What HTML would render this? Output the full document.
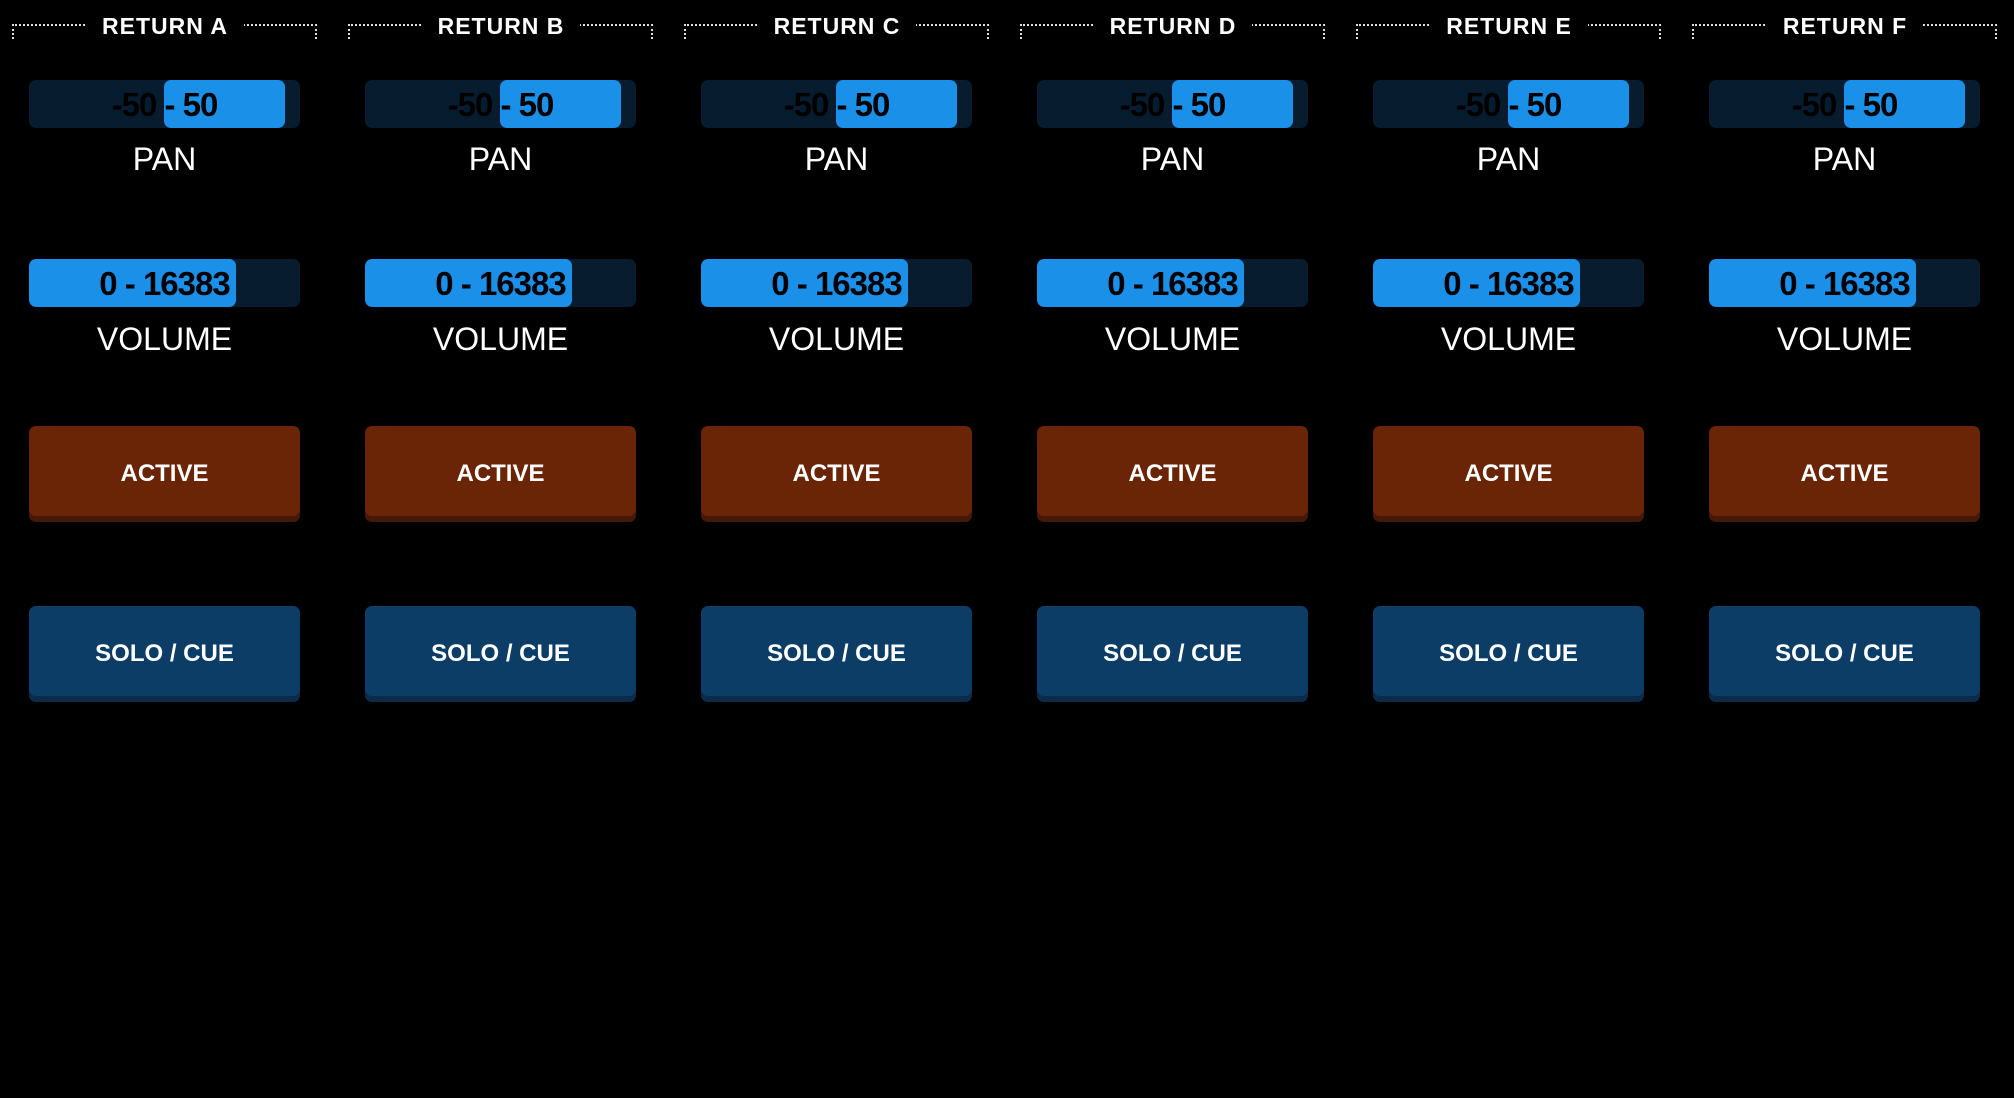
<!DOCTYPE html>
<html><head><style>
*{margin:0;padding:0;box-sizing:border-box}
body{width:2014px;height:1098px;background:#000;position:relative;overflow:hidden;font-family:"Liberation Sans",sans-serif}
.col{position:absolute;top:0;width:336px;height:1098px}
.br{position:absolute;left:12px;top:24px;width:305px;height:15px;border:2px dotted #ddd;border-bottom:none}
.tt{position:absolute;left:0;width:330px;top:13px;text-align:center;}
.tt span{background:#000;color:#fff;font-weight:bold;font-size:23px;padding:0 16px;letter-spacing:1px}
.bar{position:absolute;left:29px;width:271px;height:48px;background:#081c30;border-radius:7px;overflow:hidden}
.fill{position:absolute;top:0;height:48px;background:#1a90e8;border-radius:7px}
.bt{position:absolute;left:0;width:100%;top:1px;line-height:48px;text-align:center;font-weight:bold;font-size:33px;color:#000;letter-spacing:-1px}
.lbl{position:absolute;left:29px;width:271px;text-align:center;color:#fff;font-size:32px;line-height:40px}
.btn{position:absolute;left:29px;width:271px;height:96px;border-radius:7px;color:#fff;font-weight:bold;font-size:24px;text-align:center;line-height:96px}
.act{top:426px;background:#6a2506;box-shadow:inset 0 -6px 0 #45190a}
.solo{top:606px;background:#0c3d66;box-shadow:inset 0 -6px 0 #0a2c4a}
</style></head><body>
<div class="col" style="left:0"><div class="br"></div><div class="tt"><span>RETURN A</span></div>
<div class="bar" style="top:80px"><div class="fill" style="left:135px;width:121px"></div><div class="bt">-50 - 50</div></div><div class="lbl" style="top:139px">PAN</div>
<div class="bar" style="top:259px"><div class="fill" style="left:0;width:207px"></div><div class="bt">0 - 16383</div></div><div class="lbl" style="top:319px">VOLUME</div>
<div class="btn act">ACTIVE</div><div class="btn solo">SOLO / CUE</div></div>
<div class="col" style="left:336px"><div class="br"></div><div class="tt"><span>RETURN B</span></div>
<div class="bar" style="top:80px"><div class="fill" style="left:135px;width:121px"></div><div class="bt">-50 - 50</div></div><div class="lbl" style="top:139px">PAN</div>
<div class="bar" style="top:259px"><div class="fill" style="left:0;width:207px"></div><div class="bt">0 - 16383</div></div><div class="lbl" style="top:319px">VOLUME</div>
<div class="btn act">ACTIVE</div><div class="btn solo">SOLO / CUE</div></div>
<div class="col" style="left:672px"><div class="br"></div><div class="tt"><span>RETURN C</span></div>
<div class="bar" style="top:80px"><div class="fill" style="left:135px;width:121px"></div><div class="bt">-50 - 50</div></div><div class="lbl" style="top:139px">PAN</div>
<div class="bar" style="top:259px"><div class="fill" style="left:0;width:207px"></div><div class="bt">0 - 16383</div></div><div class="lbl" style="top:319px">VOLUME</div>
<div class="btn act">ACTIVE</div><div class="btn solo">SOLO / CUE</div></div>
<div class="col" style="left:1008px"><div class="br"></div><div class="tt"><span>RETURN D</span></div>
<div class="bar" style="top:80px"><div class="fill" style="left:135px;width:121px"></div><div class="bt">-50 - 50</div></div><div class="lbl" style="top:139px">PAN</div>
<div class="bar" style="top:259px"><div class="fill" style="left:0;width:207px"></div><div class="bt">0 - 16383</div></div><div class="lbl" style="top:319px">VOLUME</div>
<div class="btn act">ACTIVE</div><div class="btn solo">SOLO / CUE</div></div>
<div class="col" style="left:1344px"><div class="br"></div><div class="tt"><span>RETURN E</span></div>
<div class="bar" style="top:80px"><div class="fill" style="left:135px;width:121px"></div><div class="bt">-50 - 50</div></div><div class="lbl" style="top:139px">PAN</div>
<div class="bar" style="top:259px"><div class="fill" style="left:0;width:207px"></div><div class="bt">0 - 16383</div></div><div class="lbl" style="top:319px">VOLUME</div>
<div class="btn act">ACTIVE</div><div class="btn solo">SOLO / CUE</div></div>
<div class="col" style="left:1680px"><div class="br"></div><div class="tt"><span>RETURN F</span></div>
<div class="bar" style="top:80px"><div class="fill" style="left:135px;width:121px"></div><div class="bt">-50 - 50</div></div><div class="lbl" style="top:139px">PAN</div>
<div class="bar" style="top:259px"><div class="fill" style="left:0;width:207px"></div><div class="bt">0 - 16383</div></div><div class="lbl" style="top:319px">VOLUME</div>
<div class="btn act">ACTIVE</div><div class="btn solo">SOLO / CUE</div></div>
</body></html>
